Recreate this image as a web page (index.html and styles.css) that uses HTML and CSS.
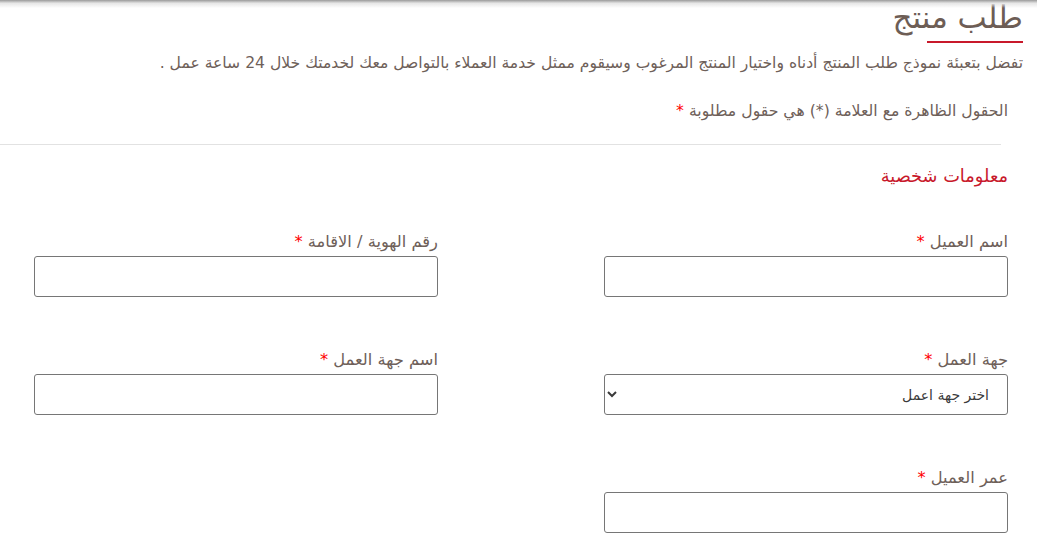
FILE: index.html
```html
<!DOCTYPE html>
<html lang="ar" dir="rtl">
<head>
  <meta charset="UTF-8">
  <title>طلب منتج</title>
  <link rel="stylesheet" href="styles.css">
</head>
<body>

<div class="top-shadow"></div>

<div class="page">
  <h1 class="page-title">طلب منتج</h1>
  <p class="intro">تفضل بتعبئة نموذج طلب المنتج أدناه واختيار المنتج المرغوب وسيقوم ممثل خدمة العملاء بالتواصل معك لخدمتك خلال 24 ساعة عمل .</p>
  <p class="note">الحقول الظاهرة مع العلامة (*) هي حقول مطلوبة <span class="req">*</span></p>
</div>

<hr class="divider">

<form class="request-form">
  <h3 class="section-title">معلومات شخصية</h3>

  <div class="fields">
    <div class="field">
      <label>اسم العميل <span class="req">*</span></label>
      <input type="text">
    </div>
    <div class="field">
      <label>رقم الهوية / الاقامة <span class="req">*</span></label>
      <input type="text">
    </div>
    <div class="field">
      <label>جهة العمل <span class="req">*</span></label>
      <select>
        <option>اختر جهة اعمل</option>
      </select>
    </div>
    <div class="field">
      <label>اسم جهة العمل <span class="req">*</span></label>
      <input type="text">
    </div>
    <div class="field">
      <label>عمر العميل <span class="req">*</span></label>
      <input type="text">
    </div>
  </div>
</form>

</body>
</html>
```

FILE: styles.css
```css
* {
  margin: 0;
  padding: 0;
  box-sizing: border-box;
}

body {
  font-family: 'DejaVu Sans', sans-serif;
  color: #6e6059;
  background: #fff;
  overflow: hidden;
}

.top-shadow {
  position: fixed;
  top: 0;
  left: 0;
  right: 0;
  height: 8px;
  background: linear-gradient(#9a9a9a, #e6e6e6 40%, rgba(255, 255, 255, 0));
  pointer-events: none;
}

.page {
  padding: 0 14px 0 0;
}

.page-title {
  display: block;
  width: max-content;
  font-size: 31px;
  font-weight: 400;
  line-height: 34px;
  color: #6d5d55;
}

.page-title::after {
  content: '';
  display: block;
  width: 96px;
  height: 2px;
  margin-top: 7px;
  background: #c8192b;
}

.intro {
  font-size: 15.6px;
  line-height: 20px;
  margin-top: 10px;
}

.note {
  font-size: 15.7px;
  line-height: 20px;
  margin-top: 28px;
  padding-right: 15px;
}

.req {
  color: #f00;
}

.divider {
  border: 0;
  border-top: 1px solid #e2e2e2;
  margin: 23px 36px 0 0;
}

.request-form {
  padding-right: 29px;
}

.section-title {
  font-size: 17.8px;
  font-weight: 400;
  color: #c8192b;
  margin-top: 19px;
  line-height: 24px;
}

.fields {
  display: grid;
  grid-template-columns: 404px 404px;
  column-gap: 166px;
  row-gap: 53px;
  margin-top: 44px;
}

.field label {
  display: block;
  font-size: 16.3px;
  line-height: 20px;
  margin-bottom: 4px;
}

.field input,
.field select {
  display: block;
  width: 100%;
  height: 41px;
  border: 1px solid #767676;
  border-radius: 3px;
  background: #fff;
  font-family: inherit;
  font-size: 14px;
  color: #3a3a3a;
}

.field select {
  padding: 0 14px 0 8px;
}
```
